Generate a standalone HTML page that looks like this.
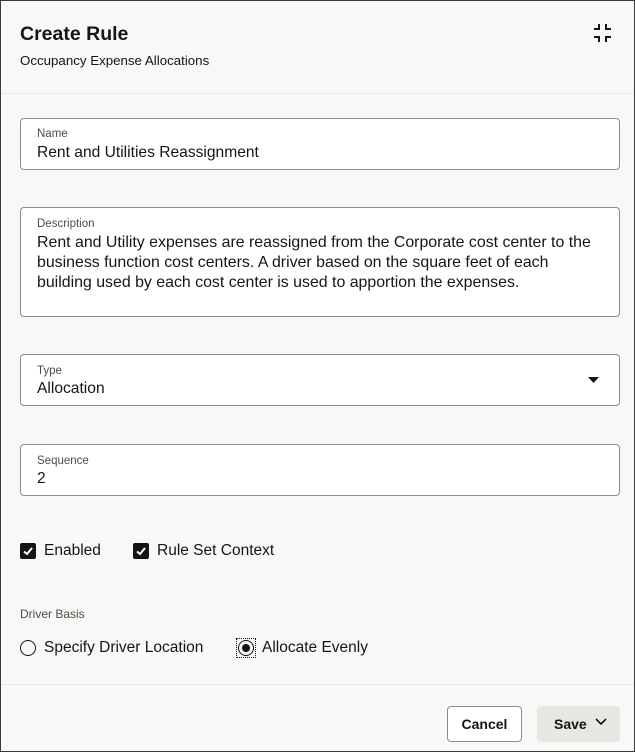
<!DOCTYPE html>
<html><head><style>
*{box-sizing:border-box;margin:0;padding:0}
body{width:635px;height:752px;background:#fff;font-family:"Segoe UI","Liberation Sans",sans-serif;color:#161513;overflow:hidden}
.frame{position:absolute;left:0;top:0;width:635px;height:752px;border:1px solid #3a3a3a;background:#f9f8f6}
.abs{position:absolute}
.field{position:absolute;left:20px;width:600px;background:#fff;border:1px solid #8f8c88;border-radius:4px}
.lab{position:absolute;left:16px;font-size:11.5px;color:#4f4c48}
.val{position:absolute;left:16px;font-size:15.6px;white-space:nowrap}
.cb{position:absolute;width:16px;height:16px;background:#161513;border-radius:2px}
.txt{position:absolute;font-size:15.5px;white-space:nowrap}
</style></head><body>
<div class="frame"></div>
<div class="abs" style="left:20px;top:23px;font-size:19.5px;font-weight:bold">Create Rule</div>
<div class="abs" style="left:20px;top:53px;font-size:13.3px">Occupancy Expense Allocations</div>
<svg class="abs" style="left:593px;top:24px" width="20" height="20" viewBox="0 0 20 20" fill="none" stroke="#161513" stroke-width="2"><path d="M1 5H6V0M13 0V5H18M1 13H6V18M18 13H13V18"/></svg>
<div class="abs" style="left:1px;top:93px;width:633px;height:1px;background:#e8e6e3"></div>

<div class="field" style="top:118px;height:52px"><div class="lab" style="top:9px">Name</div><div class="val" style="top:25px">Rent and Utilities Reassignment</div></div>
<div class="field" style="top:207px;height:110px"><div class="lab" style="top:10px">Description</div><div class="val" style="top:25px;line-height:20px;font-size:15.9px">Rent and Utility expenses are reassigned from the Corporate cost center to the<br>business function cost centers. A driver based on the square feet of each<br>building used by each cost center is used to apportion the expenses.</div></div>
<div class="field" style="top:354px;height:52px"><div class="lab" style="top:10px">Type</div><div class="val" style="top:25px">Allocation</div>
<svg class="abs" style="left:567px;top:22px" width="12" height="7"><path d="M0 0H11L5.5 6Z" fill="#161513"/></svg></div>
<div class="field" style="top:444px;height:52px"><div class="lab" style="top:10px">Sequence</div><div class="val" style="top:25px">2</div></div>

<div class="cb" style="left:20px;top:543px"></div>
<svg class="abs" style="left:20px;top:543px" width="16" height="16"><path d="M4 8.5L7 11L12 5" stroke="#fff" stroke-width="2" fill="none"/></svg>
<div class="txt" style="left:44px;top:542px">Enabled</div>
<div class="cb" style="left:133px;top:543px"></div>
<svg class="abs" style="left:133px;top:543px" width="16" height="16"><path d="M4 8.5L7 11L12 5" stroke="#fff" stroke-width="2" fill="none"/></svg>
<div class="txt" style="left:157px;top:542px">Rule Set Context</div>

<div class="abs" style="left:20px;top:607px;font-size:12px;color:#4f4c48">Driver Basis</div>
<div class="abs" style="left:20px;top:640px;width:16px;height:16px;border:1.5px solid #161513;border-radius:50%"></div>
<div class="txt" style="left:44px;top:639px">Specify Driver Location</div>
<div class="abs" style="left:236px;top:638px;width:20px;height:20px;border:1px dotted #161513"></div>
<div class="abs" style="left:238px;top:640px;width:16px;height:16px;border:1.5px solid #161513;border-radius:50%"></div>
<div class="abs" style="left:242px;top:644px;width:8px;height:8px;background:#161513;border-radius:50%"></div>
<div class="txt" style="left:262px;top:639px">Allocate Evenly</div>

<div class="abs" style="left:1px;top:684px;width:633px;height:1px;background:#e8e6e3"></div>
<div class="abs" style="left:447px;top:706px;width:75px;height:36px;border:1px solid #8f8c88;border-radius:4px;background:#fff;font-size:14px;font-weight:bold;text-align:center;line-height:34px">Cancel</div>
<div class="abs" style="left:537px;top:706px;width:83px;height:36px;border-radius:4px;background:#e9e7e4;font-size:14px;font-weight:bold;line-height:36px;padding-left:17px">Save</div>
<svg class="abs" style="left:595px;top:718px" width="12" height="8"><path d="M1 1L6 6L11 1" stroke="#161513" stroke-width="1.6" fill="none"/></svg>
</body></html>
